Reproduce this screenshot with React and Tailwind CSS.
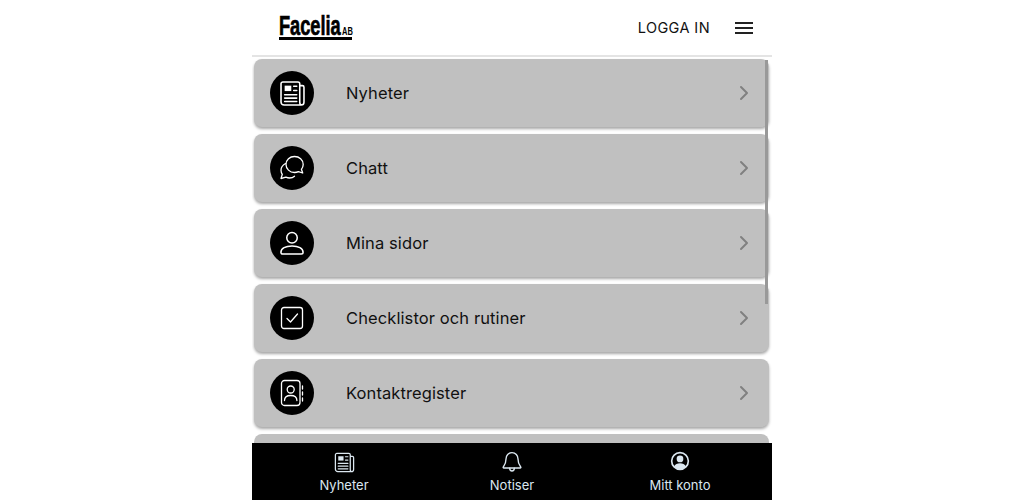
import { ChevronRight } from 'lucide-react';

const NewsIcon = ({ className }) => (
    <svg viewBox="0 0 24 24" fill="none" stroke="currentColor" strokeWidth="1.3" strokeLinejoin="round" strokeLinecap="round" className={className}>
        <path d="M18 5.500h2.200c.7 0 1.300.6 1.300 1.300v12.400c0 1.300-1 2.300-2.300 2.300H5c-1.400 0-2.500-1.100-2.500-2.500V4c0-.8.7-1.500 1.500-1.500h12.500c.8 0 1.500.7 1.500 1.500v15.200c0 1.300.8 2.300 1.700 2.300" />
        <rect x="5.500" y="5.500" width="5.500" height="4.500" fill="currentColor" stroke="none" />
        <path d="M13 6h2.500M13 9.500h2.500M5.500 13h10M5.500 15.800h10M5.500 18.600h10" />
    </svg>
);

const ChatIcon = ({ className }) => (
    <svg viewBox="0 0 28 28" fill="none" stroke="currentColor" strokeWidth="1.300" strokeLinejoin="round" strokeLinecap="round" className={className}>
        <path d="M16.500 2.500c-4.800 0-8.500 3.500-8.500 8 0 4.400 3.700 8 8.500 8 1.500 0 2.700-.3 3.900-.9l4.300 1.400-1.300-3.700c1.100-1.400 1.800-3 1.800-4.800 0-4.500-3.900-8-8.700-8z" />
        <path d="M7.500 9.500c-2.600 1.400-4.500 3.800-4.500 6.800 0 1.500.5 2.900 1.300 4l-1.300 4.200 4.900-1.300c1.200.5 2.300.8 3.600.8 2 0 3.800-.7 5-1.800" />
    </svg>
);

const PersonIcon = ({ className }) => (
    <svg viewBox="0 0 24 24" fill="none" stroke="currentColor" strokeWidth="1.300" className={className}>
        <circle cx="12" cy="7.500" r="4.500" />
        <path d="M2.500 20c0-3.300 4-5.500 9.500-5.500s9.500 2.200 9.500 5.500c0 1-.6 1.500-1.500 1.500H4c-.9 0-1.500-.5-1.500-1.500z" />
    </svg>
);

const CheckIcon = ({ className }) => (
    <svg viewBox="0 0 24 24" fill="none" stroke="currentColor" strokeWidth="1.300" strokeLinejoin="round" strokeLinecap="round" className={className}>
        <rect x="1.500" y="1.500" width="21" height="21" rx="2.500" />
        <path d="M7 12.500l3.500 3.500 7-8" />
    </svg>
);

const ContactIcon = ({ className }) => (
    <svg viewBox="0 0 24 28" fill="none" stroke="currentColor" strokeWidth="1.300" strokeLinejoin="round" strokeLinecap="round" className={className}>
        <rect x="1.500" y="1.500" width="18.500" height="25" rx="3" />
        <circle cx="10.700" cy="10.500" r="3.500" />
        <path d="M4.500 21.500c0-3 2.500-5 6.200-5s6.200 2 6.200 5" />
        <path d="M22.500 7v3M22.500 13v3M22.500 19v3" />
    </svg>
);

const BellIcon = ({ className }) => (
    <svg viewBox="0 0 24 24" fill="none" stroke="currentColor" strokeWidth="1.500" strokeLinejoin="round" strokeLinecap="round" className={className}>
        <path d="M12 1.800c-3.900 0-6.500 3-6.500 6.700 0 4.500-1 6.500-3 9 -.4.500 0 1 .5 1h18c.5 0 .9-.5.5-1-2-2.500-3-4.500-3-9 0-3.700-2.600-6.700-6.500-6.700z" />
        <path d="M9.500 18.800c0 1.800 1 3 2.500 3s2.500-1.200 2.500-3" />
    </svg>
);

const AccountIcon = ({ className }) => (
    <svg viewBox="0 0 24 24" className={className}>
        <circle cx="12" cy="12" r="10" fill="none" stroke="currentColor" strokeWidth="2" />
        <circle cx="12" cy="9.500" r="4" fill="currentColor" />
        <path d="M4.800 18.500c1.500-2.600 4-3.800 7.200-3.800s5.700 1.200 7.200 3.800c-1.800 2.100-4.300 3.500-7.200 3.500s-5.400-1.400-7.200-3.500z" fill="currentColor" />
    </svg>
);

const menuItems = [
    { label: 'Nyheter', icon: <NewsIcon className="h-[29px] w-[29px]" /> },
    { label: 'Chatt', icon: <ChatIcon className="h-[28px] w-[28px]" /> },
    { label: 'Mina sidor', icon: <PersonIcon className="h-[28px] w-[28px]" /> },
    { label: 'Checklistor och rutiner', icon: <CheckIcon className="h-[24px] w-[24px]" /> },
    { label: 'Kontaktregister', icon: <ContactIcon className="h-[28px] w-[24px]" /> },
];

const tabs = [
    { label: 'Nyheter', icon: <NewsIcon className="h-[23px] w-[23px]" /> },
    { label: 'Notiser', icon: <BellIcon className="h-[22px] w-[22px]" /> },
    { label: 'Mitt konto', icon: <AccountIcon className="h-[20px] w-[20px]" /> },
];

const MenuCard = ({ label, icon }) => (
    <div className="flex h-[68px] shrink-0 items-center rounded-[8px] bg-[#c0c0c0] pr-[13px] pl-4 shadow-[0_2px_3px_rgba(0,0,0,0.35)]">
        <div className="flex h-11 w-11 shrink-0 items-center justify-center rounded-full bg-black text-white">
            {icon}
        </div>
        <span className="mt-[1px] ml-8 flex-1 text-[16.5px] tracking-[0.1px] text-[#111]">{label}</span>
        <ChevronRight className="h-6 w-6 text-[#808080]" strokeWidth={2} />
    </div>
);

const App = () => {
    return (
        <div className="flex h-screen justify-center overflow-hidden bg-white font-['Inter','Liberation_Sans',sans-serif]">
            <div className="relative flex w-[520px] flex-col">
                <header className="flex h-[57px] shrink-0 items-center justify-between border-b-2 border-[#e4e4e4] pr-[19px] pl-[27px]">
                    {/* wordmark, underline runs beneath both words */}
                    <div className="flex w-[73px] items-end border-b-[3px] border-black font-['Liberation_Sans',sans-serif] font-bold text-black">
                        <span className="block w-[63px] origin-left scale-x-[0.65] whitespace-nowrap text-[28px] leading-[22px] [-webkit-text-stroke:0.7px_black]">
                            Facelia
                        </span>
                        <span className="block origin-left scale-x-[0.75] text-[10px] leading-[10px]">AB</span>
                    </div>
                    <div className="flex items-center gap-[25px]">
                        <span className="text-[14.5px] tracking-[0.4px] text-[#111]">LOGGA IN</span>
                        <div className="flex w-[18px] flex-col gap-[3px]">
                            <div className="h-[2px] bg-[#222]" />
                            <div className="h-[2px] bg-[#222]" />
                            <div className="h-[2px] bg-[#222]" />
                        </div>
                    </div>
                </header>

                <main className="flex min-h-0 flex-1 flex-col gap-[7px] overflow-hidden pt-[2px] pr-[3px] pl-[2px]">
                    {menuItems.map((item) => (
                        <MenuCard key={item.label} label={item.label} icon={item.icon} />
                    ))}
                    {/* next row, only its top edge shows above the tab bar */}
                    <div className="h-[68px] shrink-0 rounded-[8px] bg-[#c0c0c0]" />
                </main>

                {/* scroll thumb sits on top of the list */}
                <div className="absolute top-[60px] right-[4px] h-[244px] w-[3px] bg-[#999]" />

                <footer className="grid h-[57px] shrink-0 grid-cols-3 bg-black px-2 text-[#dbe7f0]">
                    {tabs.map((tab) => (
                        <div key={tab.label} className="flex h-[52px] flex-col items-center justify-between pt-[8px]">
                            {tab.icon}
                            <span className="text-[13px] leading-[20px]">{tab.label}</span>
                        </div>
                    ))}
                </footer>
            </div>
        </div>
    );
};

export default App;
